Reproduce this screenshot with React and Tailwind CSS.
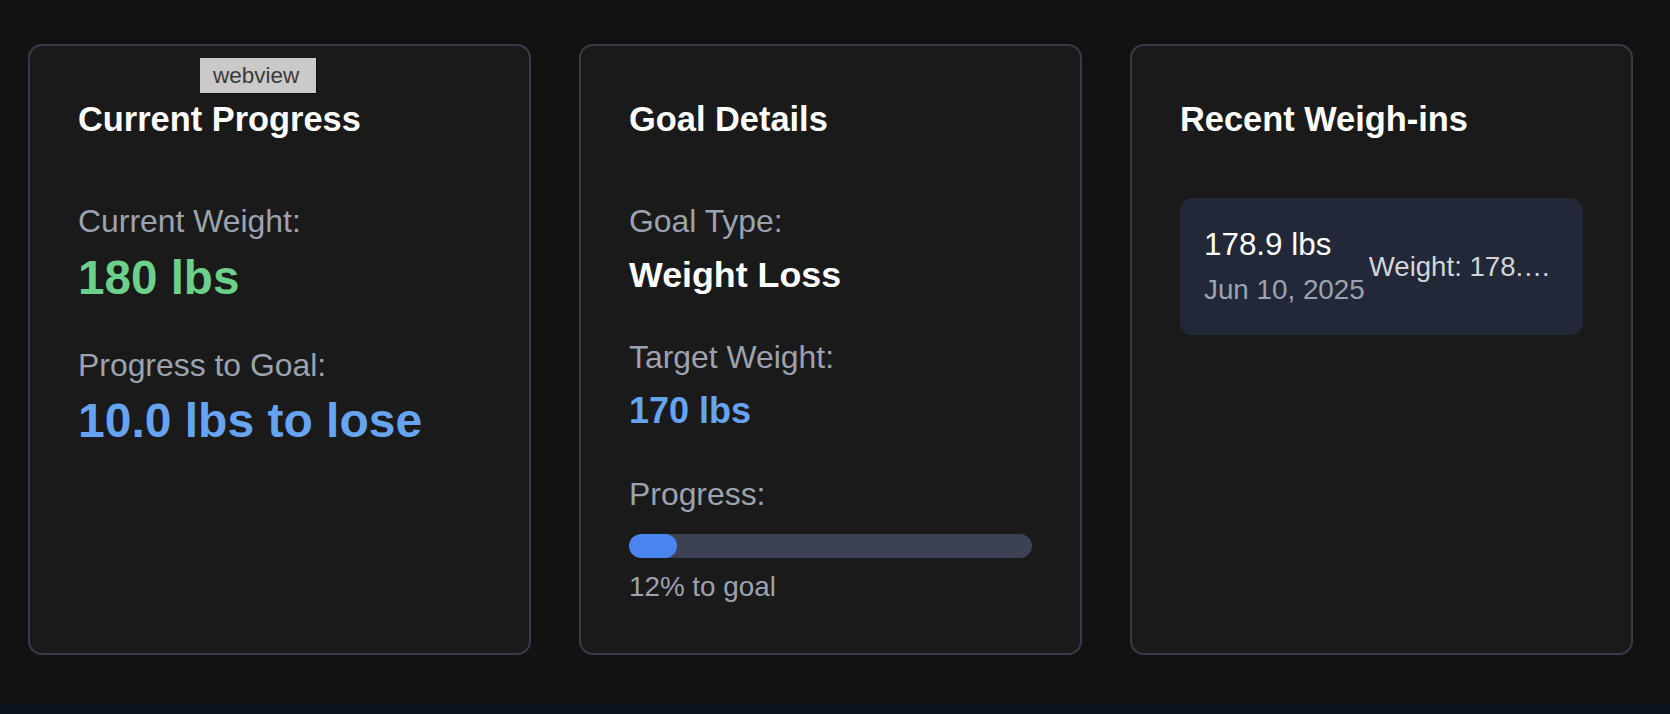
import React from 'react'

const label = 'text-[31.9px] leading-[47px] text-[#9ca3af]'
const heading = 'text-[34.4px] leading-[51px] font-bold text-white mb-[53px]'

function Card({ children }) {
  return (
    <div className="flex-1 h-[611px] rounded-[14px] border-2 border-[#353c4a] bg-[#1a1a1a] p-[48px]">
      {children}
    </div>
  )
}

export default function App() {
  const progress = 12

  return (
    <div
      className="relative h-[714px] overflow-hidden bg-[#121212] flex flex-col"
      style={{ fontFamily: '"Liberation Sans", Arial, sans-serif' }}
    >
      <div className="flex gap-[48px] pl-[28px] pr-[37px] pt-[44px]">
        {/* Current progress */}
        <Card>
          <h2 className={heading}>Current Progress</h2>
          <div>
            <p className={`${label} mb-[5px]`}>Current Weight:</p>
            <p className="text-[47.6px] leading-[56px] font-bold text-[#6dd08a]">180 lbs</p>
          </div>
          <div className="mt-[36px]">
            <p className={`${label} mb-[4px]`}>Progress to Goal:</p>
            <p className="text-[48px] leading-[56px] font-bold text-[#66a3f0]">10.0 lbs to lose</p>
          </div>
        </Card>

        {/* Goal details */}
        <Card>
          <h2 className={heading}>Goal Details</h2>
          <p className={`${label} mb-[9px]`}>Goal Type:</p>
          <p className="text-[35.8px] leading-[43px] font-bold text-white">Weight Loss</p>
          <p className={`${label} mt-[37px] mb-[8px]`}>Target Weight:</p>
          <p className="text-[36px] leading-[43px] font-bold text-[#66a3f0]">170 lbs</p>
          <p className={`${label} mt-[39px]`}>Progress:</p>
          <div className="mt-[16px] h-[24px] w-full rounded-full bg-[#3c4253] overflow-hidden">
            <div className="h-full rounded-full bg-[#4a85ef]" style={{ width: `${progress}%` }} />
          </div>
          <p className="mt-[12px] text-[27.8px] leading-[33px] text-[#9ca3af]">{progress}% to goal</p>
        </Card>

        {/* Recent weigh-ins */}
        <Card>
          <h2 className={heading}>Recent Weigh-ins</h2>
          <div className="flex items-center rounded-[13px] bg-[#222837] p-[24px]">
            <div className="shrink-0">
              <p className="text-[31.4px] leading-[46.5px] text-white">178.9 lbs</p>
              <p className="text-[27.8px] leading-[42px] text-[#9ca3af]">Jun 10, 2025</p>
            </div>
            <p className="ml-[4px] flex-1 min-w-0 truncate text-[27.6px] leading-[41px] text-[#d1d5db]">
              Weight: 178.9 lbs
            </p>
          </div>
        </Card>
      </div>

      <div className="flex-1" />
      <div className="h-[10px] bg-[#0d1321]" />

      {/* devtools label overlay */}
      <div className="absolute left-[200px] top-[58px] flex h-[35px] w-[116px] items-center pl-[13px] bg-[#cbcac8] text-[22.5px] text-[#3a3a3a] shadow-[1px_1px_0_rgba(0,0,0,0.35)]">
        webview
      </div>
    </div>
  )
}
